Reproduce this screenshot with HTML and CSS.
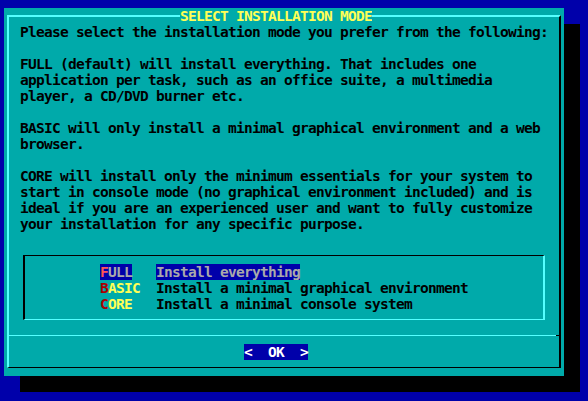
FILE: index.html
```html
<!DOCTYPE html>
<html>
<head>
<meta charset="utf-8">
<link rel="stylesheet" href="styles.css">
</head>
<body>
<div class="dialog">
  <div class="frame">
    <div class="title">SELECT INSTALLATION MODE</div>
    <div class="body">
      <p>Please select the installation mode you prefer from the following:</p>
      <p>FULL (default) will install everything. That includes one<br>application per task, such as an office suite, a multimedia<br>player, a CD/DVD burner etc.</p>
      <p>BASIC will only install a minimal graphical environment and a web<br>browser.</p>
      <p>CORE will install only the minimum essentials for your system to<br>start in console mode (no graphical environment included) and is<br>ideal if you are an experienced user and want to fully customize<br>your installation for any specific purpose.</p>
    </div>
    <div class="menu">
      <div class="item selected">
        <div class="tag-col"><span class="tag"><span class="hot">F</span>ULL</span></div>
        <span class="desc">Install everything</span>
      </div>
      <div class="item">
        <div class="tag-col"><span class="tag"><span class="hot">B</span>ASIC</span></div>
        <span class="desc">Install a minimal graphical environment</span>
      </div>
      <div class="item">
        <div class="tag-col"><span class="tag"><span class="hot">C</span>ORE</span></div>
        <span class="desc">Install a minimal console system</span>
      </div>
    </div>
    <div class="sep"></div>
    <div class="buttons"><span class="btn">&lt;  OK  &gt;</span></div>
  </div>
</div>
</body>
</html>
```
FILE: styles.css
```css
html, body {
  margin: 0;
  height: 401px;
  overflow: hidden;
}
body {
  background: #0000aa;
  padding: 8px 0 0 4px;
  box-sizing: border-box;
  font-family: "DejaVu Sans Mono", "Liberation Mono", monospace;
  font-weight: bold;
  font-size: 14.5px;
  letter-spacing: -0.7297px;
  line-height: 16px;
  color: #000;
}
.dialog {
  width: 560px;
  height: 368px;
  background: #00aaaa;
  box-shadow: 16px 16px 0 0 #000;
  padding-top: 7px;
  box-sizing: border-box;
}
.frame {
  margin: 0 3px;
  height: 353px;
  box-sizing: border-box;
  border-top: 2px solid #55ffff;
  border-left: 2px solid #55ffff;
  border-right: 2px solid #000;
  border-bottom: 1px solid #000;
}
.title {
  width: 192px;
  margin: -9px 0 0 171px;
  height: 16px;
  background: #00aaaa;
  color: #ffff55;
  white-space: pre;
  overflow: hidden;
}
.body {
  padding-left: 11px;
}
.body p {
  margin: 0 0 16px;
  white-space: pre;
}
.body p:last-child {
  margin-bottom: 0;
}
.menu {
  margin: 23px 0 0 14px;
  width: 522px;
  box-sizing: border-box;
  border-top: 1px solid #000;
  border-left: 2px solid #000;
  border-right: 2px solid #55ffff;
  border-bottom: 1px solid #55ffff;
  padding: 8px 0 7px 75px;
}
.item {
  display: flex;
  height: 16px;
}
.tag-col {
  width: 56px;
  flex: none;
}
.tag, .desc {
  white-space: pre;
}
.tag {
  color: #ffff55;
}
.tag .hot {
  color: #aa0000;
}
.item.selected .tag {
  background: #0000aa;
  color: #aaaaaa;
}
.item.selected .tag .hot {
  color: #ff5555;
}
.item.selected .desc {
  background: #0000aa;
  color: #aaaaaa;
}
.sep {
  margin-top: 15px;
  height: 1px;
  background: #55ffff;
  border-right: 3px solid #000;
}
.buttons {
  margin-top: 8px;
  padding-left: 235px;
  height: 16px;
}
.btn {
  display: inline-block;
  width: 64px;
  height: 16px;
  background: #0000aa;
  color: #ffffff;
  white-space: pre;
}
```
